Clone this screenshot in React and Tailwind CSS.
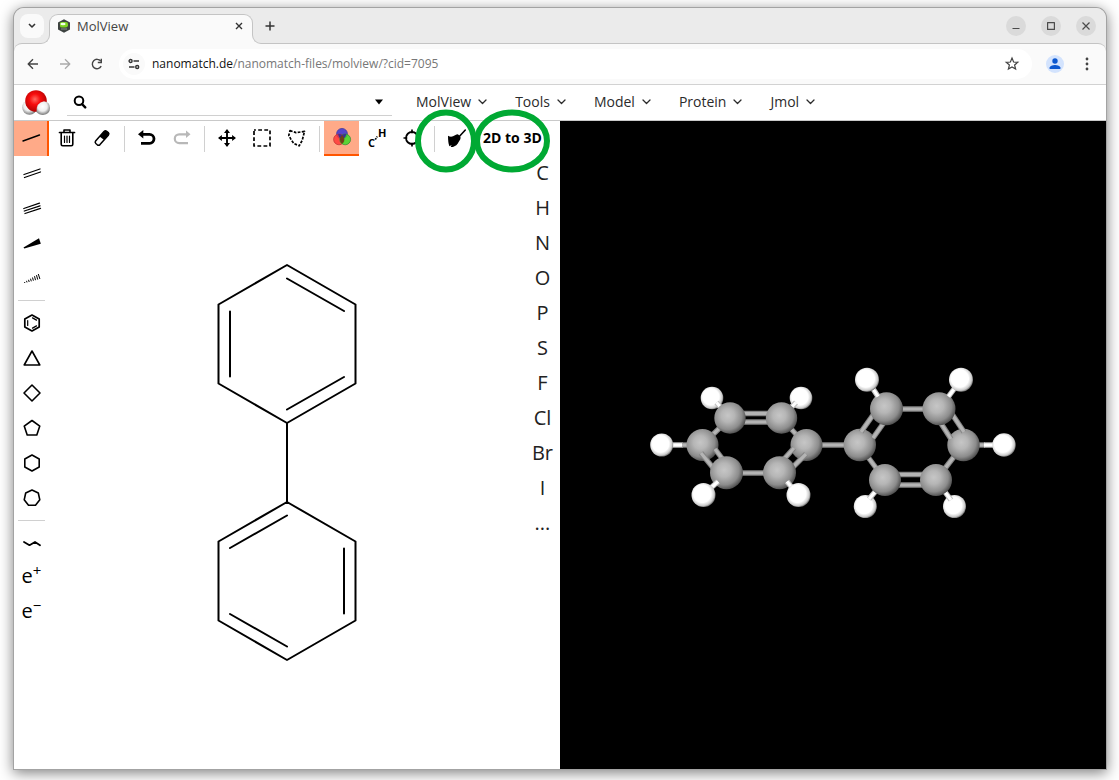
import React from "react";

const line = { fill: "none", stroke: "currentColor", strokeLinecap: "round", strokeLinejoin: "round" };

function Icon({ size = 20, children, ...rest }) {
  return (
    <svg width={size} height={size} viewBox={`0 0 ${size} ${size}`} aria-hidden="true" {...rest}>
      {children}
    </svg>
  );
}

function Chevron() {
  return (
    <svg width="9" height="6" viewBox="0 0 9 6" aria-hidden="true">
      <path d="M1 1l3.5 3.5L8 1" {...line} strokeWidth="1.3" />
    </svg>
  );
}

/* ---------- browser chrome ---------- */

function WindowButton({ label, children }) {
  return (
    <button aria-label={label} className="flex size-5 items-center justify-center rounded-full bg-[#dadada] text-[#4a4a4a]">
      <Icon size={10} {...line} strokeLinecap="butt" strokeWidth="1.2">{children}</Icon>
    </button>
  );
}

function TabStrip() {
  return (
    <div className="flex h-[35px] items-end bg-[#ebebeb] pl-1.5">
      <button aria-label="Search tabs" className="mb-[5px] flex size-6 items-center justify-center rounded-lg bg-[#fafafa] text-[#333]">
        <svg width="8" height="6" viewBox="0 0 8 6" aria-hidden="true"><path d="M1 1l3 3 3-3" {...line} strokeLinecap="butt" strokeWidth="1.6" /></svg>
      </button>
      <div className="relative z-10 -mb-px ml-[5px] flex h-[30px] w-[204px] items-center rounded-t-[9px] border-x border-t border-[#c4c4c4] bg-[#fafafa] pb-2 pl-[7px] pr-[5px]">
        <span className="absolute -left-[9px] bottom-0 size-[9px] bg-[#fafafa]">
          <span className="block size-full rounded-br-[9px] border-b border-r border-[#c4c4c4] bg-[#ebebeb]" />
        </span>
        <span className="absolute -right-[9px] bottom-0 size-[9px] bg-[#fafafa]">
          <span className="block size-full rounded-bl-[9px] border-b border-l border-[#c4c4c4] bg-[#ebebeb]" />
        </span>
        <Icon size={14}>
          <path d="M7 .3l6 3.200v7L7 13.700l-6-3.200V3.500z" fill="#3d4240" />
          <path d="M3 4.200Q3 3 5 3h4q2 0 2 2v2q-1 1.500-3 1.500H5Q3 8.500 3 7z" fill="#7ed321" />
          <ellipse cx="6" cy="5" rx="2.600" ry="1.300" fill="#f4ffe9" />
          <path d="M4 10h6" stroke="#8b908d" strokeWidth="1" />
        </Icon>
        <span className="ml-[6px] flex-1 text-[13px] leading-5 text-[#444]">MolView</span>
        <button aria-label="Close tab" className="flex size-4 items-center justify-center text-[#333]">
          <Icon size={8}><path d="M1 1l6 6M7 1L1 7" {...line} strokeLinecap="butt" strokeWidth="1.4" /></Icon>
        </button>
      </div>
      <button aria-label="New tab" className="mb-[7px] ml-[7px] flex size-5 items-center justify-center text-[#333]">
        <Icon size={10}><path d="M5 .5v9M.5 5h9" {...line} strokeLinecap="butt" strokeWidth="1.5" /></Icon>
      </button>
      <div className="mb-[7px] ml-auto flex gap-[15px] pr-[10px]">
        <WindowButton label="Minimize"><path d="M1.500 7.500h7" /></WindowButton>
        <WindowButton label="Maximize"><path d="M1.600 1.600h6.800v6.800H1.600z" /></WindowButton>
        <WindowButton label="Close"><path d="M1.500 1.500l7 7M8.500 1.500l-7 7" /></WindowButton>
      </div>
    </div>
  );
}

function AddressBar() {
  return (
    <div className="flex h-[42px] items-center rounded-t-lg border-y border-t-[#c4c4c4] border-b-[#d2d2d2] bg-[#fafafa] pl-[9px] pr-[9px]">
      <button aria-label="Back" className="flex w-5 justify-center text-[#444]">
        <Icon size={12}><path d="M11 6H1.500M6 1.200L1.200 6 6 10.800" {...line} strokeLinecap="butt" strokeWidth="1.400" /></Icon>
      </button>
      <button aria-label="Forward" className="ml-3 flex w-5 justify-center text-[#aaa]">
        <Icon size={12}><path d="M1 6h9.500M6 1.200L10.800 6 6 10.800" {...line} strokeLinecap="butt" strokeWidth="1.300" /></Icon>
      </button>
      <button aria-label="Reload" className="ml-3 flex w-5 justify-center text-[#444]">
        <Icon size={12}>
          <path d="M10.200 8.200A4.700 4.700 0 1 1 9.800 3.200" {...line} strokeLinecap="butt" strokeWidth="1.400" />
          <path d="M11 .8v4.400H6.800V3.800h2.800V.8z" fill="currentColor" />
        </Icon>
      </button>
      <div className="ml-3 flex h-[30px] flex-1 items-center rounded-full bg-white pl-1 pr-3">
        <button aria-label="Site information" className="flex size-[22px] items-center justify-center rounded-full bg-[#fafafa] text-[#333]">
          <Icon size={12} {...line} strokeLinecap="butt" strokeWidth="1.400">
            <circle cx="2.600" cy="3" r="1.500" /><path d="M5.500 3H11" />
            <circle cx="9.200" cy="9" r="1.500" /><path d="M1 9h5.500" />
          </Icon>
        </button>
        <a href="#address" className="ml-[7px] flex-1 text-[12px] leading-5 text-[#777]">
          <span className="text-[#111]">nanomatch.de</span>/nanomatch-files/molview/?cid=7095
        </a>
        <button aria-label="Bookmark this page" className="text-[#444]">
          <Icon size={16}><path d="M8 2l1.600 4 4.200.3-3.200 2.700 1 4.100L8 10.900l-3.600 2.200 1-4.100L2.200 6.300 6.400 6z" {...line} strokeLinejoin="miter" strokeWidth="1.200" /></Icon>
        </button>
      </div>
      <button aria-label="Profile" className="ml-3.5 flex size-[18px] items-center justify-center rounded-full bg-[#d3e3fd] text-[#0b57d0]">
        <Icon size={12}><circle cx="6" cy="3" r="2.700" fill="currentColor" /><path d="M.6 11V9.600Q1.500 7 6 7t5.400 2.600V11z" fill="currentColor" /></Icon>
      </button>
      <button aria-label="Browser menu" className="ml-[13px] flex w-5 justify-center text-[#444]">
        <Icon size={14} fill="currentColor"><circle cx="7" cy="2" r="1.400" /><circle cx="7" cy="7" r="1.400" /><circle cx="7" cy="12" r="1.400" /></Icon>
      </button>
    </div>
  );
}

/* ---------- MolView menu bar ---------- */

function Logo() {
  return (
    <svg width="28" height="26" viewBox="0 0 28 26" role="img" aria-label="MolView logo">
      <defs>
        <radialGradient id="oxygen" cx=".45" cy=".42" r=".62"><stop offset="0" stopColor="#ff6a60" /><stop offset=".4" stopColor="#f80d0d" /><stop offset="1" stopColor="#a80000" /></radialGradient>
        <radialGradient id="hydrogenLogo" cx=".45" cy=".38" r=".62"><stop offset="0" stopColor="#fff" /><stop offset=".55" stopColor="#eee" /><stop offset="1" stopColor="#777" /></radialGradient>
      </defs>
      <circle cx="7.500" cy="17.500" r="7.300" fill="url(#hydrogenLogo)" />
      <circle cx="14" cy="11" r="10.800" fill="url(#oxygen)" />
      <path d="M14.500 22Q14 12.500 22 11.200Q28 12 28 18T21 25Q17 25 14.500 22z" fill="url(#hydrogenLogo)" />
    </svg>
  );
}

function MenuBar() {
  return (
    <header className="flex h-9 items-center border-b border-[#c9c9c9] bg-white pl-2 text-[#2b2b2b]">
      <Logo />
      <form role="search" className="ml-[17px] flex h-[31px] w-[325px] items-center self-start border-b border-[#d0d0d0] pt-1 pl-[6px] pr-2" onSubmit={(e) => e.preventDefault()}>
        <button aria-label="Search" className="text-black">
          <Icon size={14}><circle cx="6" cy="5.800" r="4.300" {...line} strokeWidth="2" /><path d="M9.200 9.200l3 3.200" {...line} strokeWidth="2.400" /></Icon>
        </button>
        <input aria-label="Search molecules" className="mx-2 h-6 min-w-0 flex-1 text-sm outline-none" />
        <button aria-label="Search options" className="text-black">
          <svg width="10" height="6" viewBox="0 0 10 6" aria-hidden="true"><path d="M1 .5h8L5 5.500z" fill="currentColor" /></svg>
        </button>
      </form>
      <nav className="ml-[10px] flex pb-px">
        {["MolView", "Tools", "Model", "Protein", "Jmol"].map((name) => (
          <button key={name} className="flex items-center gap-[7px] px-3.5 text-sm">
            {name}
            <Chevron />
          </button>
        ))}
      </nav>
    </header>
  );
}

/* ---------- sketcher ---------- */

function Tool({ label, children, className = "" }) {
  return (
    <button aria-label={label} className={`flex size-[35px] shrink-0 items-center justify-center pb-px text-black ${className}`}>
      {children}
    </button>
  );
}

function VSep() {
  return <span className="ml-[5px] mr-1 h-[26px] w-px shrink-0 bg-[#d0d0d0]" />;
}

function HSep() {
  return <span className="mt-1 mb-[5px] h-px w-[27px] bg-[#d0d0d0]" />;
}

function Toolbar() {
  return (
    <div className="flex h-[35px] items-center">
      <Tool label="Single bond" className="border-r-2 border-[#ff5500] bg-[#ffaa88]">
        <Icon><path d="M2 13L18.500 7" {...line} strokeWidth="1.400" /></Icon>
      </Tool>
      <Tool label="Clear">
        <Icon>
          <g {...line}>
            <path d="M2.500 4.500h15" strokeWidth="1.700" />
            <path d="M7 4.200V2h6v2.200M4.200 4.700v11.500q0 1.500 1.500 1.500h8.600q1.500 0 1.500-1.500V4.700" strokeWidth="1.600" />
            <path d="M7.500 8v6.500M10 8v6.500M12.500 8v6.500" strokeWidth="1.200" />
          </g>
        </Icon>
      </Tool>
      <Tool label="Eraser">
        <Icon>
          <path d="M3.600 13L12 3.500q1.300-1.200 2.700-.2l1.600 1.200q1.200 1.300 0 2.700L8 16.600q-1.300 1.200-2.700.2l-1.500-1.300q-1.200-1.200-.2-2.500z" {...line} strokeWidth="1.500" />
          <path d="M7.500 8.500L12 3.500q1.300-1.200 2.700-.2l1.600 1.200q1.200 1.300 0 2.700L12.200 12z" fill="currentColor" />
        </Icon>
      </Tool>
      <VSep />
      <Tool label="Undo">
        <Icon>
          <path d="M5 6.300h7.500a4.500 4.500 0 0 1 0 9H4" {...line} strokeLinecap="butt" strokeWidth="2.800" />
          <path d="M1 6.300L6.300 2v8.600z" fill="currentColor" />
        </Icon>
      </Tool>
      <Tool label="Redo" className="text-[#b8b8b8]!">
        <Icon>
          <path d="M15 6.300H7.200a4.400 4.400 0 0 0 0 8.800H16" {...line} strokeLinecap="butt" strokeWidth="2.200" />
          <path d="M18.500 6.300L14 2.500v7.600z" fill="currentColor" />
        </Icon>
      </Tool>
      <VSep />
      <Tool label="Drag">
        <Icon>
          <path d="M10 3v14M3 10h14" {...line} strokeWidth="1.900" />
          <path d="M10 1l3 3.900H7zM10 19l3-3.900H7zM1 10l3.900-3v6zM19 10l-3.900-3v6z" fill="currentColor" />
        </Icon>
      </Tool>
      <Tool label="Rectangle select">
        <Icon><path d="M2 2h16v16H2z" {...line} strokeLinecap="butt" strokeWidth="1.700" strokeDasharray="3.800 2.300" strokeDashoffset="1.900" /></Icon>
      </Tool>
      <Tool label="Lasso select">
        <Icon><path d="M3 2.600l6 2q3-.3 8.500-1.200l-2.300 9-3 5.400L7 15.600 4.300 12 1.800 7.400z" {...line} strokeLinecap="butt" strokeWidth="1.700" strokeDasharray="2.700 1.400" /></Icon>
      </Tool>
      <VSep />
      <Tool label="Color mode" className="border-b-2 border-[#ff5500] bg-[#ffaa88]">
        <Icon>
          <circle cx="10" cy="6.800" r="5.400" fill="#5544cc" stroke="#333399" strokeWidth=".7" />
          <circle cx="7" cy="12.400" r="5.400" fill="#ff3333" fillOpacity=".8" stroke="#bb3333" strokeWidth=".7" />
          <circle cx="13.200" cy="12.400" r="5.400" fill="#33dd22" fillOpacity=".8" stroke="#338833" strokeWidth=".7" />
          <path d="M6.200 7.100a5.400 5.400 0 0 1 3.900 1 5.400 5.400 0 0 1 4-1A5.400 5.400 0 0 1 10.100 12.200 5.400 5.400 0 0 1 6.200 7.100z" fill="#3d3190" />
          <path d="M10.100 8.100a5.400 5.400 0 0 1 2.200 4.300 5.400 5.400 0 0 1-2.200 4.400 5.400 5.400 0 0 1 0-8.700z" fill="#704018" />
        </Icon>
      </Tool>
      <Tool label="Full skeletal formula">
        <Icon overflow="visible">
          <text x="1" y="19" className="text-[11px] font-bold" fill="currentColor">C</text>
          <text x="11" y="9" className="text-[11px] font-bold" fill="currentColor">H</text>
          <path d="M8.300 11.500l2-3" {...line} strokeLinecap="butt" strokeWidth="1.600" strokeDasharray="1.700 .8" />
        </Icon>
      </Tool>
      <Tool label="Center">
        <Icon {...line}><circle cx="10" cy="10" r="6" strokeWidth="1.800" /><path d="M10 1.500v3.800M10 14.700v3.800M1.500 10h3.800M14.700 10h3.800" strokeWidth="1.700" strokeLinecap="butt" /></Icon>
      </Tool>
      <VSep />
      <Tool label="Clean">
        <Icon>
          <path d="M18.300 2l-6 6.500" {...line} strokeWidth="1.600" />
          <path d="M1 7.700q2.500 1.600 5 .6l3-1.600q1.600-.9 3 .5l1 1q1.200 1.400.2 3.200-1.400 2.100-2.400 4.200-.8 2-4.300 3.200-1.200.4-2.800.2l.9-1.900-2.200 1.200Q1 15 1 7.700z" fill="currentColor" />
        </Icon>
      </Tool>
      <button className="h-[35px] px-[9px] pb-0.5 text-sm font-bold whitespace-nowrap text-black">2D to 3D</button>
    </div>
  );
}

const rings = [
  ["Cyclopropane", "M10 3l7.800 14H2.200z"],
  ["Cyclobutane", "M10 2l8 8-8 8-8-8z"],
  ["Cyclopentane", "M10 2.500l7.800 5.600-3 8.900H5.200l-3-8.900z"],
  ["Cyclohexane", "M10 2l7.200 4v8L10 18l-7.200-4V6z"],
  ["Cycloheptane", "M10 2l6.300 3 1.500 6.800-4.300 5.500h-7l-4.300-5.500L3.700 5z"],
];

function BondColumn() {
  return (
    <div className="flex w-[35px] flex-col items-center text-[#1a1a1a]">
      <Tool label="Double bond"><Icon><path d="M2 11.500l16-5.500M2.500 14.500l16-5.500" {...line} strokeWidth="1.300" /></Icon></Tool>
      <Tool label="Triple bond"><Icon><path d="M1.800 10.500L17.500 5.200M2.300 13L18 7.800M3 15.500L18.500 10.300" {...line} strokeWidth="1.300" /></Icon></Tool>
      <Tool label="Wedge bond"><Icon><path d="M1.500 14.500L17 5.200l1.800 5.500-16.500 4.800z" fill="currentColor" /></Icon></Tool>
      <Tool label="Hash bond">
        <Icon><path d="M2.500 14l.4 1M4.500 12.800l.5 1.600M6.500 11.800l.7 2.200M8.500 10.700l.8 2.600M10.500 9.500l.9 3.200M12.500 8.200l1 4M14.500 7.100l1.200 4.500M16.300 6l1.600 5" {...line} strokeLinecap="butt" strokeWidth="1" /></Icon>
      </Tool>
      <HSep />
      <Tool label="Benzene">
        <Icon {...line}><path d="M10 2l7.200 4v8L10 18l-7.200-4V6z" strokeWidth="1.700" /><path d="M5.700 7.500v5M10.500 4.900l4 2.200M10.500 15.100l4-2.200" strokeWidth="1.200" /></Icon>
      </Tool>
      {rings.map(([name, d]) => (
        <Tool key={name} label={name}><Icon><path d={d} {...line} strokeWidth="1.600" /></Icon></Tool>
      ))}
      <HSep />
      <Tool label="Chain"><Icon><path d="M2 9l5.500 3.200L13 9l5 3.200" {...line} strokeWidth="1.800" /></Icon></Tool>
      <Tool label="Positive charge"><span className="pb-1 text-xl">e<sup>+</sup></span></Tool>
      <Tool label="Negative charge"><span className="pb-1 text-xl">e<sup>−</sup></span></Tool>
    </div>
  );
}

function Biphenyl2D() {
  return (
    <svg viewBox="49 156 476 613" className="h-full min-h-0 w-full min-w-0" role="img" aria-label="Structural formula of biphenyl">
      <g fill="none" stroke="#000" strokeWidth="2" strokeLinecap="round" strokeLinejoin="round">
        <path d="M287 265L355.500 304.500V383.500L287 423 218.500 383.500V304.500z" />
        <path d="M287 278.500L344 311M344 377L287 409.500M230 311.500V376.500" />
        <path d="M287 423V502" />
        <path d="M287 502L355.500 541.500V620.500L287 660 218.500 620.500V541.500z" />
        <path d="M287 515.500L230 548M230 614L287 646.500M344 548.500V613.500" />
      </g>
    </svg>
  );
}

function Sketcher() {
  return (
    <section aria-label="Sketcher" className="relative flex min-w-0 flex-1 flex-col bg-white">
      <Toolbar />
      <div className="flex flex-1">
        <BondColumn />
        <div className="flex min-w-0 flex-1"><Biphenyl2D /></div>
        <div className="flex w-[35px] flex-col">
          {["C", "H", "N", "O", "P", "S", "F", "Cl", "Br", "I", "..."].map((el) => (
            <button key={el} className="h-[35px] pb-0.5 text-center text-xl text-[#222]">{el}</button>
          ))}
        </div>
      </div>
      <svg width="136" height="64" viewBox="0 0 136 64" aria-hidden="true" className="pointer-events-none absolute -top-3 left-[401px]">
        <g fill="none" stroke="#00a933" strokeWidth="6">
          <ellipse cx="31" cy="32" rx="28" ry="28.500" />
          <ellipse cx="97" cy="32" rx="35" ry="28.500" />
        </g>
      </svg>
    </section>
  );
}

/* ---------- 3D model ---------- */

function Rod({ from, to, color = "#b4b4b4", edge = "#858585" }) {
  return (
    <g>
      <line x1={from[0]} y1={from[1]} x2={to[0]} y2={to[1]} stroke={edge} strokeWidth="5.400" />
      <line x1={from[0]} y1={from[1]} x2={to[0]} y2={to[1]} stroke={color} strokeWidth="3.200" />
    </g>
  );
}

const WhiteRod = (props) => <Rod {...props} color="#fff" edge="#c0c0c0" />;
const C = ({ x, y, r = 16 }) => <circle cx={x} cy={y} r={r} fill="url(#carbon)" />;
const H = ({ x, y, r = 11.7 }) => <circle cx={x} cy={y} r={r} fill="url(#hydrogen)" />;

function Viewer3D() {
  return (
    <section aria-label="3D model" className="flex min-w-0 flex-1 bg-black">
      <svg viewBox="560 121 546 648" className="h-full w-full" role="img" aria-label="Ball and stick model of biphenyl">
        <defs>
          <radialGradient id="carbon" cx=".43" cy=".42" r=".6"><stop offset="0" stopColor="#c6c6c6" /><stop offset=".35" stopColor="#b6b6b6" /><stop offset=".75" stopColor="#8c8c8c" /><stop offset="1" stopColor="#4c4c4c" /></radialGradient>
          <radialGradient id="hydrogen" cx=".45" cy=".45" r=".56"><stop offset="0" stopColor="#fff" /><stop offset=".65" stopColor="#fff" /><stop offset=".88" stopColor="#ccc" /><stop offset="1" stopColor="#777" /></radialGradient>
        </defs>
        <H x={712} y={398} r={11.300} /><H x={801} y={398} r={11.300} />
        <WhiteRod from={[716.500, 402.500]} to={[730, 418]} />
        <WhiteRod from={[796, 402.500]} to={[781, 418]} />
        <WhiteRod from={[661, 445]} to={[683, 445]} />
        <Rod from={[682, 445]} to={[702, 445]} />
        <Rod from={[730, 413.500]} to={[781, 413.500]} />
        <Rod from={[730, 422]} to={[781, 422]} />
        <Rod from={[730, 418]} to={[702, 445]} />
        <Rod from={[781, 418]} to={[806, 445]} />
        <Rod from={[806, 445]} to={[859, 445]} />
        <C x={730} y={418} r={15.700} /><C x={781.500} y={418} r={15.700} />
        <C x={702.500} y={445} /><C x={806.500} y={445} />
        <Rod from={[701, 453]} to={[719, 475]} />
        <Rod from={[715, 449]} to={[730, 469]} />
        <Rod from={[794, 448]} to={[775, 469]} />
        <Rod from={[806, 454]} to={[785, 475]} />
        <Rod from={[726, 473]} to={[779, 473]} />
        <C x={726.500} y={472.700} r={16.500} /><C x={779.500} y={472.700} r={16.500} />
        <WhiteRod from={[718, 481.500]} to={[703, 495]} />
        <WhiteRod from={[787, 481.500]} to={[798, 495]} />
        <H x={703.500} y={495} r={12} /><H x={798.500} y={495} r={12} /><H x={661.700} y={445} r={11.500} />

        <H x={865.300} y={506.500} r={11.500} /><H x={954.500} y={506.500} r={11.500} />
        <WhiteRod from={[869, 499]} to={[885, 480]} />
        <WhiteRod from={[951, 500]} to={[936, 480]} />
        <Rod from={[859, 445]} to={[885, 480]} />
        <Rod from={[963, 445]} to={[936, 480]} />
        <Rod from={[885, 474.500]} to={[936, 474.500]} />
        <Rod from={[885, 485]} to={[936, 485]} />
        <C x={885} y={480} /><C x={936} y={480} />
        <Rod from={[963, 445]} to={[985, 445]} />
        <WhiteRod from={[984, 445]} to={[1003, 445]} />
        <C x={859.800} y={445} r={16.200} /><C x={963.500} y={445} r={16.200} />
        <Rod from={[861, 432]} to={[878, 408]} />
        <Rod from={[873, 438]} to={[890, 414]} />
        <Rod from={[964, 432]} to={[948, 408]} />
        <Rod from={[951, 439]} to={[935, 414]} />
        <Rod from={[886, 409]} to={[939, 409]} />
        <C x={886.500} y={408.700} r={16.500} /><C x={939} y={408.700} r={16.500} />
        <WhiteRod from={[868, 381]} to={[878, 396.500]} />
        <WhiteRod from={[960, 381]} to={[948.500, 396.500]} />
        <H x={867} y={379.700} r={12} /><H x={961} y={379.700} r={12} /><H x={1004} y={445} r={11.700} />
      </svg>
    </section>
  );
}

export default function App() {
  return (
    <div className="flex min-h-screen bg-white pt-2 pr-[13px] pb-[11px] pl-3.5 font-['Open_Sans','Noto_Sans',sans-serif]">
      <div className="flex min-w-0 flex-1 flex-col overflow-hidden rounded-t-[10px] bg-[#ebebeb] shadow-[0_0_0_1px_#a3a3a3,0_3px_14px_1px_rgba(0,0,0,0.5)]">
        <TabStrip />
        <AddressBar />
        <MenuBar />
        <main className="flex flex-1">
          <Sketcher />
          <Viewer3D />
        </main>
      </div>
    </div>
  );
}
